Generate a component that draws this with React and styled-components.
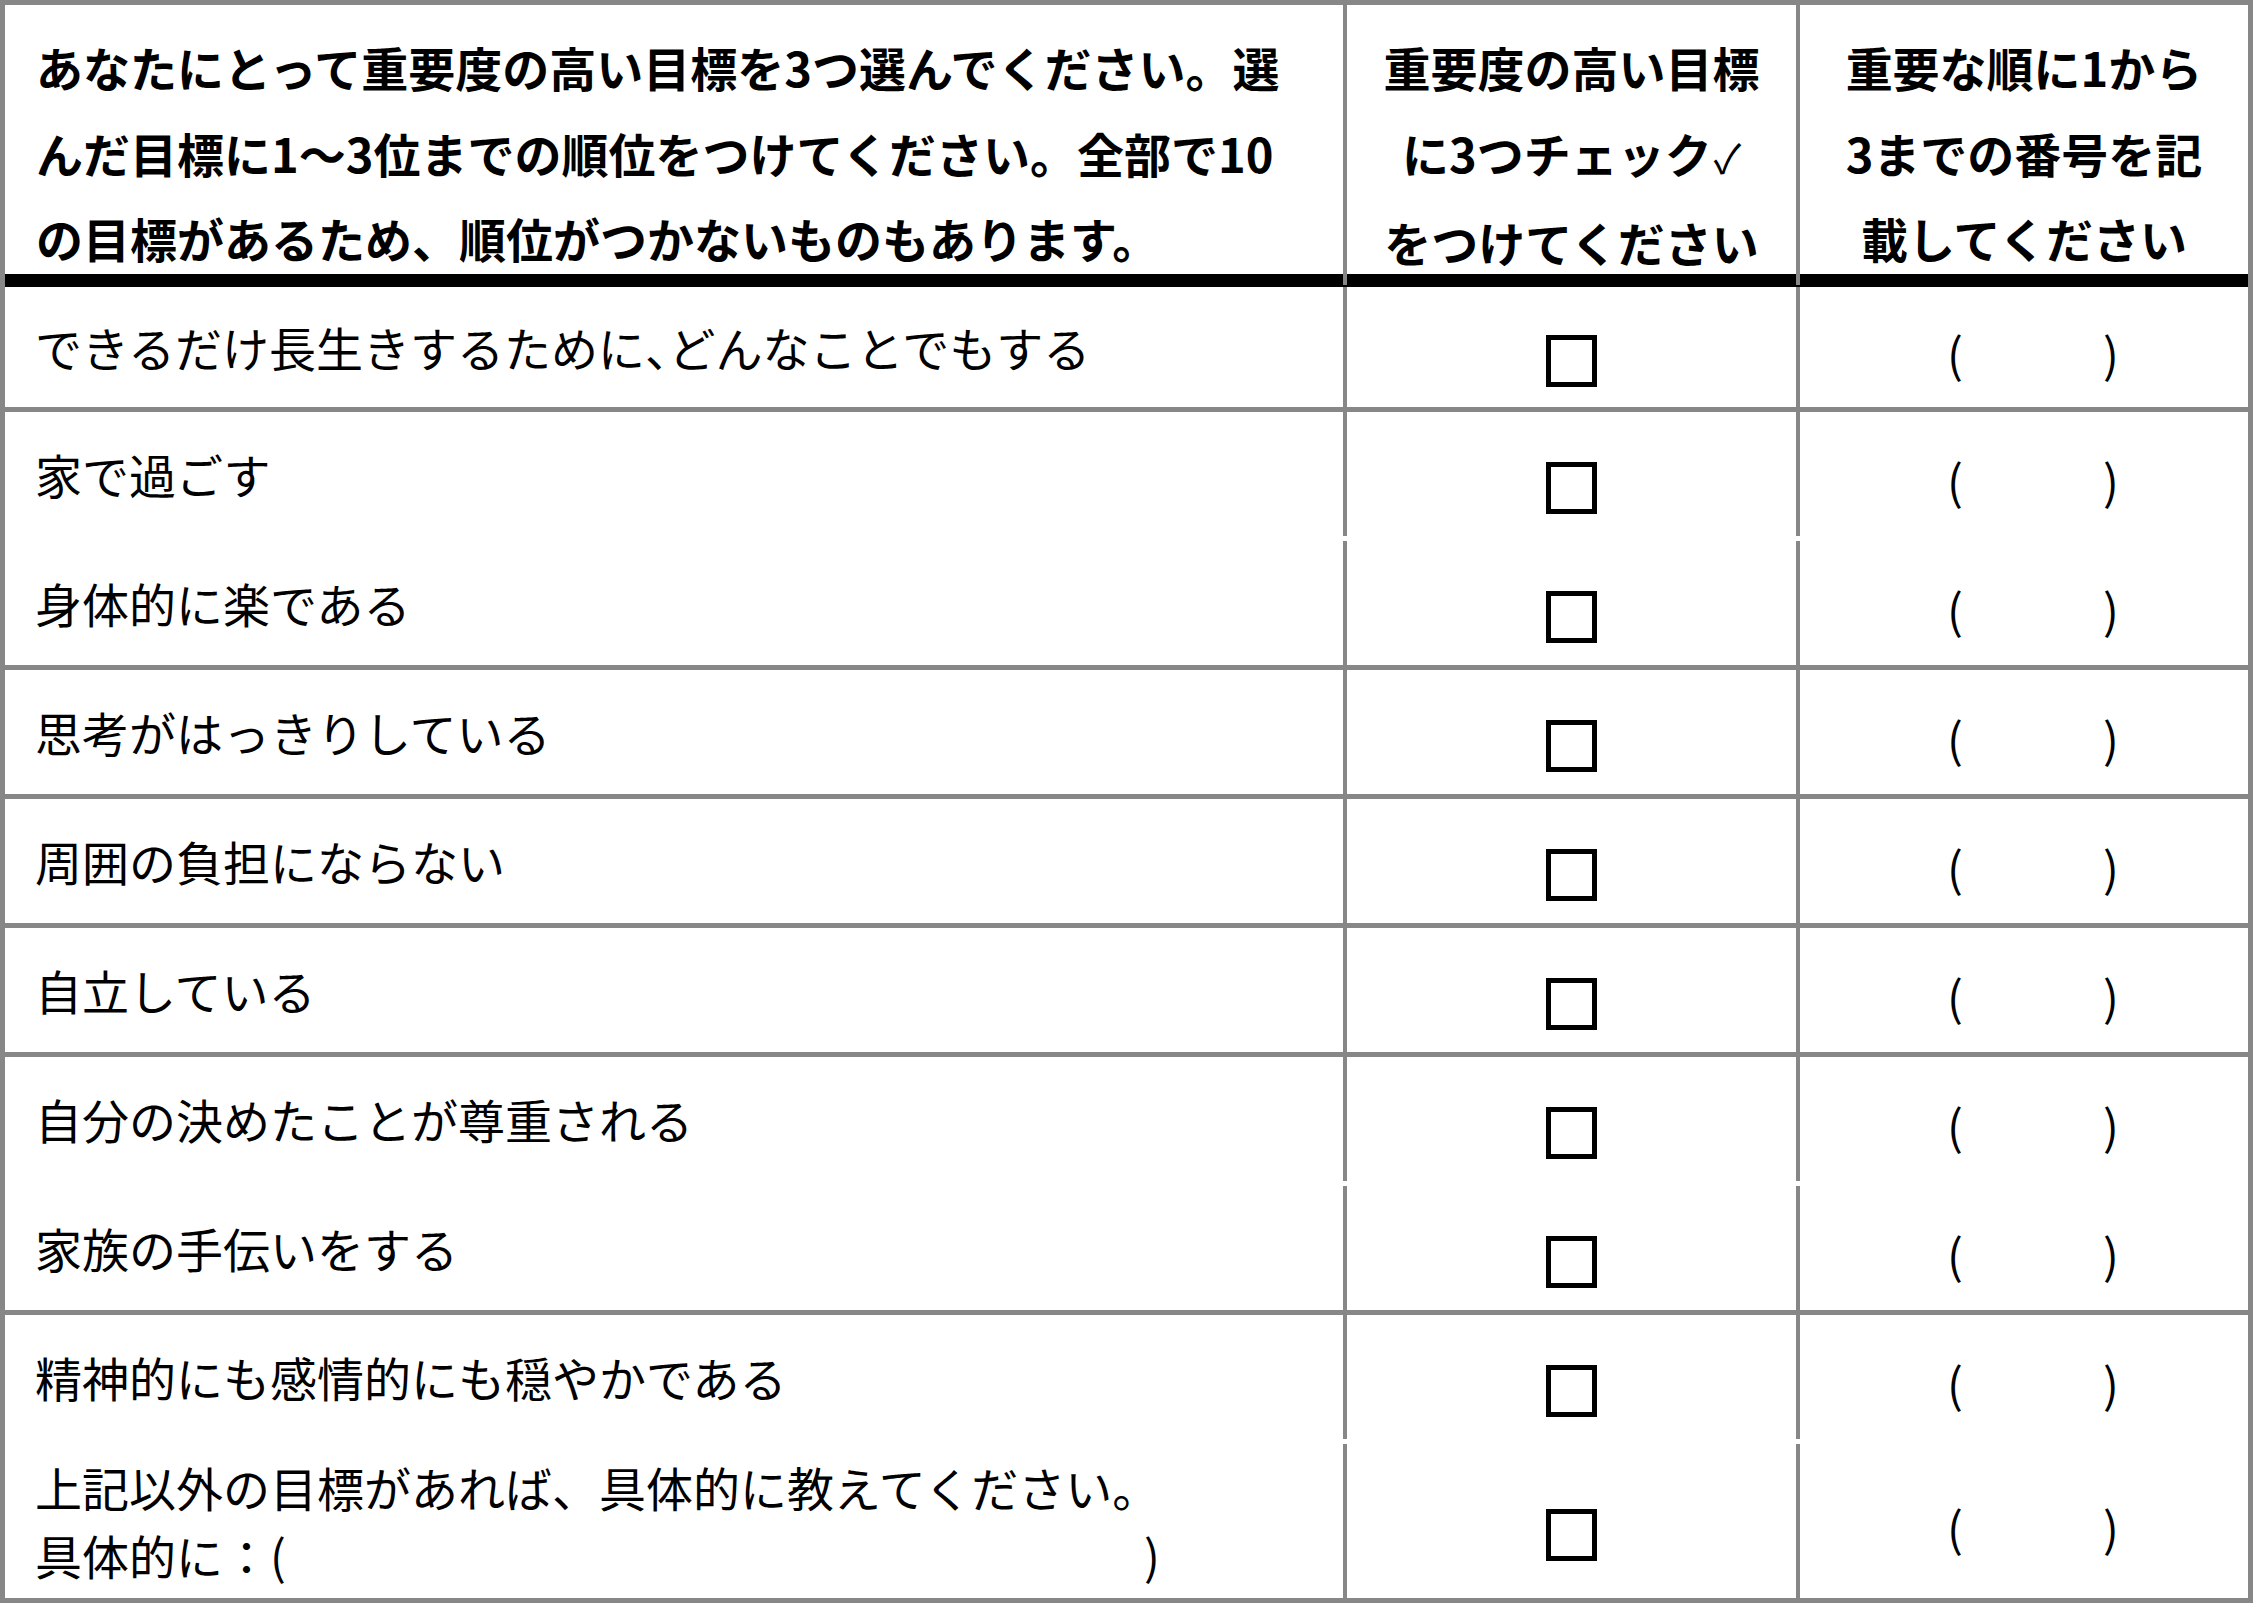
import React from "react";
import styled, { createGlobalStyle } from "styled-components";

const LINE = "#878787";

const GlobalStyle = createGlobalStyle`
  html, body {
    margin: 0;
    padding: 0;
    background: #fff;
  }
  body {
    font-family: "Noto Sans CJK JP", "Noto Sans", sans-serif;
    color: #000;
  }
`;

const Sheet = styled.div`
  width: 2253px;
  box-sizing: border-box;
  border: 5px solid ${LINE};
  background: #fff;
`;

const HeaderRow = styled.div`
  display: grid;
  grid-template-columns: 1342px 453px 1fr;
  height: 269px;
  border-bottom: 13px solid #000;
`;

const HeadCell = styled.div`
  box-sizing: border-box;
  border-right: ${(p) => (p.$last ? "none" : `4px solid ${LINE}`)};
  padding: 19px 0 0 ${(p) => (p.$center ? "0" : "31px")};
  text-align: ${(p) => (p.$center ? "center" : "left")};
  font-size: 47px;
  font-weight: 700;
  line-height: 85.5px;
  white-space: nowrap;
`;

const Check = styled.span`
  font-weight: 400;
  font-size: 40px;
  margin-left: 2px;
`;

const Group = styled.div`
  display: flex;
  flex-direction: column;
  gap: 5px;
  border-bottom: ${(p) => (p.$last ? "none" : `5px solid ${LINE}`)};
`;

const Row = styled.div`
  display: grid;
  grid-template-columns: 1342px 453px 1fr;
  height: ${(p) => p.$h}px;
`;

const LabelCell = styled.div`
  box-sizing: border-box;
  display: flex;
  align-items: center;
  border-right: 4px solid ${LINE};
  padding: 0 0 0 30px;
  font-size: 47px;
  line-height: 68px;
  white-space: nowrap;
`;

/* the comma in the first goal is set half-width */
const HalfComma = styled.span`
  font-feature-settings: "halt";
`;

const MarkCell = styled.div`
  box-sizing: border-box;
  display: flex;
  align-items: center;
  justify-content: center;
  border-right: ${(p) => (p.$last ? "none" : `4px solid ${LINE}`)};
`;

const Box = styled.div`
  box-sizing: border-box;
  width: 51px;
  height: 52px;
  border: 5px solid #000;
  margin-top: 28px;
`;

const Parens = styled.div`
  display: flex;
  justify-content: space-between;
  width: 172px;
  margin: 10px 0 0 18px;
  font-size: 47px;
  line-height: 1;
`;

const Blank = styled.span`
  display: inline-block;
  width: 858px;
`;

const groups = [
  {
    rows: [
      {
        label: (
          <span>
            できるだけ長生きするために<HalfComma>、</HalfComma>どんなことでもする
          </span>
        ),
        h: 120,
      },
    ],
  },
  { rows: [{ label: "家で過ごす" }, { label: "身体的に楽である" }] },
  { rows: [{ label: "思考がはっきりしている" }] },
  { rows: [{ label: "周囲の負担にならない" }] },
  { rows: [{ label: "自立している" }] },
  { rows: [{ label: "自分の決めたことが尊重される" }, { label: "家族の手伝いをする" }] },
  {
    rows: [
      { label: "精神的にも感情的にも穏やかである" },
      {
        label: (
          <span>
            上記以外の目標があれば、具体的に教えてください。
            <br />
            具体的に：(<Blank />)
          </span>
        ),
        h: 154,
      },
    ],
  },
];

const GoalRow = ({ label, h = 124 }) => (
  <Row $h={h}>
    <LabelCell>{label}</LabelCell>
    <MarkCell>
      <Box />
    </MarkCell>
    <MarkCell $last>
      <Parens>
        <span>(</span>
        <span>)</span>
      </Parens>
    </MarkCell>
  </Row>
);

const App = () => {
  return (
    <>
      <GlobalStyle />
      <Sheet>
        <HeaderRow>
          <HeadCell>
            あなたにとって重要度の高い目標を3つ選んでください。選
            <br />
            んだ目標に1～3位までの順位をつけてください。全部で10
            <br />
            の目標があるため、順位がつかないものもあります。
          </HeadCell>
          <HeadCell $center>
            重要度の高い目標
            <br />
            に3つチェック<Check>✓</Check>
            <br />
            をつけてください
          </HeadCell>
          <HeadCell $center $last>
            重要な順に1から
            <br />
            3までの番号を記
            <br />
            載してください
          </HeadCell>
        </HeaderRow>
        {groups.map((g, i) => (
          <Group key={i} $last={i === groups.length - 1}>
            {g.rows.map((r, j) => (
              <GoalRow key={j} label={r.label} h={r.h} />
            ))}
          </Group>
        ))}
      </Sheet>
    </>
  );
};

export default App;
